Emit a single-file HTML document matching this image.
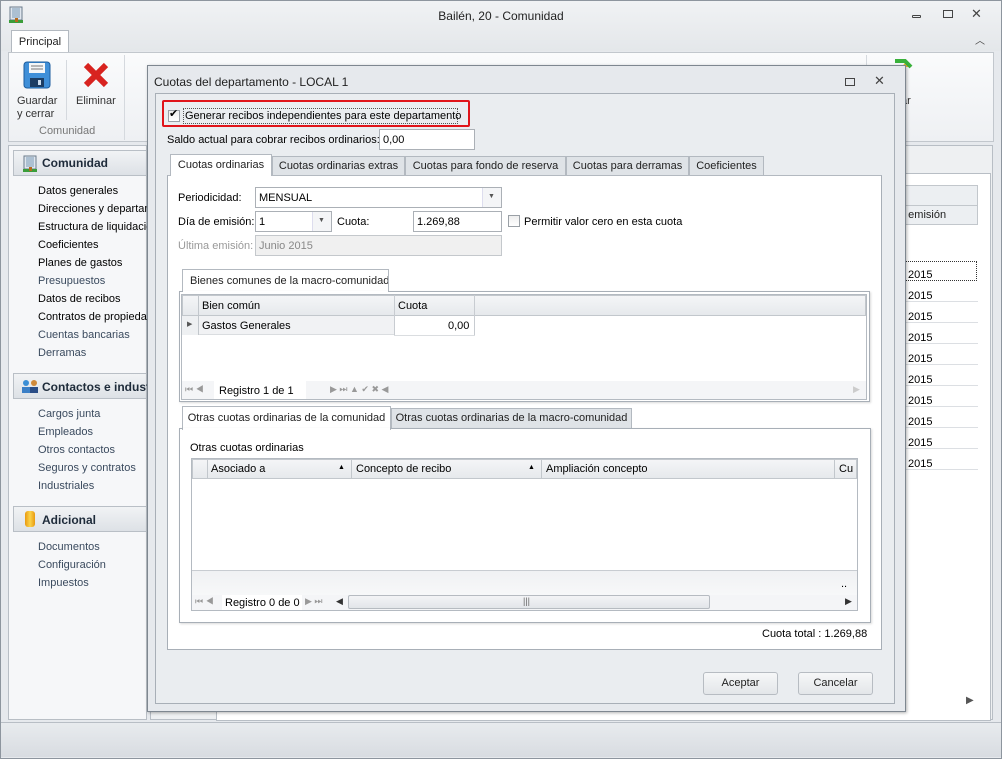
<!DOCTYPE html>
<html><head><meta charset="utf-8"><style>
*{box-sizing:border-box;margin:0;padding:0}
body{width:1002px;height:759px;overflow:hidden;background:#fff;font-family:"Liberation Sans",sans-serif;font-size:11px;color:#000;position:relative}
.a{position:absolute}
.t{position:absolute;white-space:nowrap}
.inp{position:absolute;background:#fff;border:1px solid #abb0b6}
.tab{position:absolute;background:#dfe3e7;border:1px solid #b3b9c0;border-bottom:none;text-align:center;line-height:19px;color:#222;white-space:nowrap;overflow:hidden}
.tab.on{background:#fff}
.cb{position:absolute;width:12px;height:12px;border:1px solid #9aa0a6;background:linear-gradient(#eee,#fff)}
.btn{position:absolute;border:1px solid #b7bcc2;border-radius:3px;background:linear-gradient(#f6f7f8,#e3e6e9);text-align:center;line-height:21px;color:#222}
.hd{position:absolute;background:linear-gradient(#f4f5f7,#e6e9ec);border:1px solid #c2c7cc}
.side{position:absolute;left:38px}
</style></head><body>
<div class="a" style="left:0;top:0;width:1002px;height:759px;background:#e6e9ed;border:1px solid #8d959e"></div>
<div class="a" style="left:1px;top:1px;width:1000px;height:50px;background:linear-gradient(#f0f2f4,#e4e7ea)"></div>
<svg class="a" style="left:8px;top:6px" width="16" height="18"><rect x="2" y="1" width="12" height="13" fill="#dfe6ee" stroke="#6b7c8c"/><path d="M4 3h8M4 5h8M4 7h8M4 9h8M4 11h8" stroke="#7a99b5"/><rect x="1" y="14" width="14" height="3" fill="#3a9d3a"/><rect x="7" y="12" width="3" height="4" fill="#b46a1e"/></svg>
<div class="t" style="left:0;width:1002px;text-align:center;top:9px;font-size:12px;color:#222">Bailén, 20 - Comunidad</div>
<div class="a" style="left:912px;top:15px;width:9px;height:3px;border:1px solid #444;border-radius:1px"></div>
<div class="a" style="left:943px;top:10px;width:10px;height:8px;border:1px solid #444"></div>
<div class="t" style="left:971px;top:6px;font-size:13px;color:#444">✕</div>
<div class="t" style="left:975px;top:32px;font-size:10px;color:#444">︿</div>
<div class="tab on" style="left:11px;top:30px;width:58px;height:23px;line-height:22px">Principal</div>
<div class="a" style="left:8px;top:52px;width:986px;height:90px;background:linear-gradient(#fafbfc,#eef0f3);border:1px solid #c2c7cd"></div>
<svg class="a" style="left:23px;top:61px" width="28" height="28"><rect x="1" y="1" width="26" height="26" rx="3" fill="#3f8fd8" stroke="#1d5d9e"/><rect x="6" y="2" width="16" height="10" fill="#f4f6f8"/><path d="M8 5h12M8 8h12" stroke="#777"/><rect x="7" y="17" width="14" height="9" fill="#1c3d63"/><rect x="15" y="19" width="3" height="5" fill="#cde"/></svg>
<div class="t" style="left:17px;top:95px;line-height:13px;color:#333">Guardar<br>y cerrar</div>
<div class="a" style="left:66px;top:60px;width:1px;height:60px;background:#d5d9de"></div>
<svg class="a" style="left:83px;top:62px" width="26" height="26"><path d="M3 3L23 23M23 3L3 23" stroke="#d8231f" stroke-width="6"/></svg>
<div class="t" style="left:76px;top:95px;color:#333">Eliminar</div>
<div class="t" style="left:39px;top:125px;color:#777">Comunidad</div>
<div class="a" style="left:124px;top:55px;width:1px;height:85px;background:#d5d9de"></div>
<div class="a" style="left:866px;top:55px;width:1px;height:85px;background:#d5d9de"></div>
<svg class="a" style="left:893px;top:59px" width="22" height="30"><path d="M3 8h6l4 -6 4 6h-4v20h-8z" fill="#f6c02b"/><path d="M2 2h10l6 6" fill="none" stroke="#39b13a" stroke-width="4"/></svg>
<div class="t" style="left:901px;top:95px;color:#333">ar</div>
<div class="a" style="left:8px;top:145px;width:139px;height:575px;background:#f6f7f9;border:1px solid #b8bec5"></div>
<div class="a" style="left:13px;top:150px;width:134px;height:26px;background:linear-gradient(#f1f3f5,#dde1e6);border:1px solid #b9bfc6"></div>
<svg class="a" style="left:22px;top:155px" width="16" height="18"><rect x="2" y="1" width="12" height="13" fill="#dfe6ee" stroke="#6b7c8c"/><path d="M4 3h8M4 5h8M4 7h8M4 9h8M4 11h8" stroke="#7a99b5"/><rect x="1" y="14" width="14" height="3" fill="#3a9d3a"/><rect x="7" y="12" width="3" height="4" fill="#b46a1e"/></svg>
<div class="t" style="left:42px;top:156px;font-weight:bold;font-size:12px;color:#1e2b3a">Comunidad</div>
<div class="side t" style="top:185px">Datos generales</div>
<div class="side t" style="top:203px">Direcciones y departam</div>
<div class="side t" style="top:221px">Estructura de liquidació</div>
<div class="side t" style="top:239px">Coeficientes</div>
<div class="side t" style="top:257px">Planes de gastos</div>
<div class="side t" style="top:275px;color:#3a4a5e">Presupuestos</div>
<div class="side t" style="top:293px">Datos de recibos</div>
<div class="side t" style="top:311px">Contratos de propieda</div>
<div class="side t" style="top:329px;color:#3a4a5e">Cuentas bancarias</div>
<div class="side t" style="top:347px;color:#3a4a5e">Derramas</div>
<div class="a" style="left:13px;top:373px;width:134px;height:26px;background:linear-gradient(#f1f3f5,#dde1e6);border:1px solid #b9bfc6"></div>
<svg class="a" style="left:21px;top:378px" width="18" height="16"><circle cx="5" cy="5" r="3" fill="#3b8fd6"/><circle cx="13" cy="5" r="3" fill="#d08a3a"/><rect x="1" y="9" width="8" height="6" fill="#3b7fc6"/><rect x="9" y="9" width="8" height="6" fill="#2a4d86"/></svg>
<div class="t" style="left:42px;top:380px;font-weight:bold;font-size:12px;color:#1e2b3a">Contactos e indust</div>
<div class="side t" style="top:408px;color:#3a4a5e">Cargos junta</div>
<div class="side t" style="top:426px;color:#3a4a5e">Empleados</div>
<div class="side t" style="top:444px;color:#3a4a5e">Otros contactos</div>
<div class="side t" style="top:462px;color:#3a4a5e">Seguros y contratos</div>
<div class="side t" style="top:480px;color:#3a4a5e">Industriales</div>
<div class="a" style="left:13px;top:506px;width:134px;height:26px;background:linear-gradient(#f1f3f5,#dde1e6);border:1px solid #b9bfc6"></div>
<div class="a" style="left:25px;top:511px;width:10px;height:16px;border-radius:3px;background:linear-gradient(90deg,#e89a10,#fbd34a,#e89a10)"></div>
<div class="t" style="left:42px;top:513px;font-weight:bold;font-size:12px;color:#1e2b3a">Adicional</div>
<div class="side t" style="top:541px;color:#3a4a5e">Documentos</div>
<div class="side t" style="top:559px;color:#3a4a5e">Configuración</div>
<div class="side t" style="top:577px;color:#3a4a5e">Impuestos</div>
<div class="a" style="left:150px;top:145px;width:843px;height:575px;background:#eef0f2;border:1px solid #b8bec5"></div>
<div class="a" style="left:216px;top:173px;width:775px;height:548px;background:#fff;border:1px solid #b8bec5"></div>
<div class="a" style="left:880px;top:185px;width:98px;height:40px;background:#eceff2;border:1px solid #c2c7cc"></div>
<div class="a" style="left:880px;top:205px;width:98px;height:1px;background:#c2c7cc"></div>
<div class="t" style="left:899px;top:209px;color:#222">a emisión</div>
<div class="a" style="left:880px;top:261px;width:97px;height:20px;border:1px dotted #333"></div>
<div class="t" style="left:908px;top:265px;line-height:21px">2015<br>2015<br>2015<br>2015<br>2015<br>2015<br>2015<br>2015<br>2015<br>2015</div>
<div class="a" style="left:880px;top:281px;width:98px;height:190px;background:repeating-linear-gradient(transparent 0 20px,#dcdfe3 20px 21px)"></div>
<div class="t" style="left:966px;top:695px;font-size:10px;color:#555">▶</div>
<div class="a" style="left:1px;top:722px;width:1000px;height:35px;background:linear-gradient(#e8ebee,#d8dce1);border-top:1px solid #b8bec5"></div>
<div class="a" style="left:147px;top:65px;width:759px;height:647px;background:#e6e9ed;border:1px solid #7e8790;box-shadow:1px 1px 3px rgba(0,0,0,.3)"></div>
<div class="t" style="left:154px;top:75px;font-size:12px;color:#222">Cuotas del departamento - LOCAL 1</div>
<div class="a" style="left:845px;top:78px;width:10px;height:8px;border:1px solid #444"></div>
<div class="t" style="left:874px;top:73px;font-size:13px;color:#444">✕</div>
<div class="a" style="left:155px;top:93px;width:740px;height:611px;background:#eaedf0;border:1px solid #a8afb7"></div>
<div class="a" style="left:162px;top:100px;width:308px;height:27px;border:2px solid #e0141a;border-radius:2px"></div>
<div class="cb" style="left:168px;top:110px"></div>
<div class="t" style="left:169px;top:107px;font-size:11px">✔</div>
<div class="a" style="left:183px;top:108px;width:275px;height:16px;border:1px dotted #555"></div>
<div class="t" style="left:185px;top:110px">Generar recibos independientes para este departamento</div>
<div class="t" style="left:167px;top:134px">Saldo actual para cobrar recibos ordinarios:</div>
<div class="inp" style="left:379px;top:129px;width:96px;height:21px"></div>
<div class="t" style="left:383px;top:134px">0,00</div>
<div class="tab on" style="left:170px;top:154px;width:102px;height:22px;line-height:20px">Cuotas ordinarias</div>
<div class="tab" style="left:272px;top:156px;width:133px;height:20px">Cuotas ordinarias extras</div>
<div class="tab" style="left:405px;top:156px;width:161px;height:20px">Cuotas para fondo de reserva</div>
<div class="tab" style="left:566px;top:156px;width:123px;height:20px">Cuotas para derramas</div>
<div class="tab" style="left:689px;top:156px;width:75px;height:20px">Coeficientes</div>
<div class="a" style="left:167px;top:175px;width:715px;height:475px;background:#fff;border:1px solid #a8afb7;border-top-color:#b3b9c0"></div>
<div class="a" style="left:171px;top:175px;width:100px;height:1px;background:#fff"></div>
<div class="t" style="left:178px;top:192px">Periodicidad:</div>
<div class="inp" style="left:255px;top:187px;width:247px;height:21px"></div>
<div class="t" style="left:259px;top:192px">MENSUAL</div>
<div class="a" style="left:482px;top:188px;width:19px;height:19px;border-left:1px solid #dde;background:#f4f5f7"></div>
<div class="t" style="left:488px;top:193px;font-size:7px;color:#555">▼</div>
<div class="t" style="left:178px;top:216px">Día de emisión:</div>
<div class="inp" style="left:255px;top:211px;width:77px;height:21px"></div>
<div class="t" style="left:259px;top:216px">1</div>
<div class="a" style="left:312px;top:212px;width:19px;height:19px;border-left:1px solid #dde;background:#f4f5f7"></div>
<div class="t" style="left:318px;top:217px;font-size:7px;color:#555">▼</div>
<div class="t" style="left:337px;top:216px">Cuota:</div>
<div class="inp" style="left:413px;top:211px;width:89px;height:21px"></div>
<div class="t" style="left:417px;top:216px">1.269,88</div>
<div class="cb" style="left:508px;top:215px"></div>
<div class="t" style="left:524px;top:216px">Permitir valor cero en esta cuota</div>
<div class="t" style="left:178px;top:240px;color:#999">Última emisión:</div>
<div class="inp" style="left:255px;top:235px;width:247px;height:21px;background:#f0f0f0;border-color:#c4c8cc"></div>
<div class="t" style="left:259px;top:240px;color:#888">Junio 2015</div>
<div class="tab on" style="left:182px;top:269px;width:207px;height:23px;line-height:22px;text-align:left;padding-left:7px">Bienes comunes de la macro-comunidad</div>
<div class="a" style="left:179px;top:291px;width:691px;height:111px;border:1px solid #a8afb7;box-shadow:1px 1px 2px rgba(0,0,0,.15)"></div>
<div class="a" style="left:183px;top:291px;width:205px;height:1px;background:#fff"></div>
<div class="a" style="left:181px;top:294px;width:686px;height:106px;border:1px solid #b4bac1"></div>
<div class="hd" style="left:182px;top:295px;width:684px;height:21px"></div>
<div class="a" style="left:198px;top:295px;width:1px;height:40px;background:#c2c7cc"></div>
<div class="a" style="left:394px;top:295px;width:1px;height:40px;background:#c8ccd1"></div>
<div class="a" style="left:474px;top:295px;width:1px;height:40px;background:#c8ccd1"></div>
<div class="t" style="left:202px;top:300px">Bien común</div>
<div class="t" style="left:398px;top:300px">Cuota</div>
<div class="a" style="left:182px;top:316px;width:17px;height:19px;background:#eef0f2;border-right:1px solid #c2c7cc"></div>
<div class="t" style="left:187px;top:320px;font-size:7px;color:#555">▶</div>
<div class="a" style="left:199px;top:316px;width:195px;height:19px;background:#f1f2f4;border-bottom:1px solid #dadde0"></div>
<div class="a" style="left:394px;top:335px;width:81px;height:1px;background:#dadde0"></div>
<div class="t" style="left:202px;top:320px">Gastos Generales</div>
<div class="t" style="left:448px;top:320px">0,00</div>
<div class="a" style="left:182px;top:381px;width:684px;height:18px;background:#f4f5f7"></div>
<div class="t" style="left:185px;top:384px;font-size:9px;color:#999">⏮ ◀</div>
<div class="a" style="left:214px;top:381px;width:92px;height:18px;background:#fff"></div>
<div class="t" style="left:219px;top:385px">Registro 1 de 1</div>
<div class="t" style="left:330px;top:384px;font-size:9px;color:#999">▶ ⏭ ▲ ✔ ✖ ◀</div>
<div class="t" style="left:853px;top:384px;font-size:9px;color:#ccc">▶</div>
<div class="tab on" style="left:182px;top:406px;width:209px;height:24px;line-height:22px">Otras cuotas ordinarias de la comunidad</div>
<div class="tab" style="left:391px;top:408px;width:241px;height:21px">Otras cuotas ordinarias de la macro-comunidad</div>
<div class="a" style="left:179px;top:428px;width:692px;height:195px;border:1px solid #a8afb7;box-shadow:1px 1px 2px rgba(0,0,0,.15)"></div>
<div class="a" style="left:183px;top:428px;width:207px;height:1px;background:#fff"></div>
<div class="t" style="left:190px;top:442px">Otras cuotas ordinarias</div>
<div class="a" style="left:191px;top:458px;width:667px;height:153px;border:1px solid #b4bac1"></div>
<div class="hd" style="left:192px;top:459px;width:665px;height:20px"></div>
<div class="a" style="left:207px;top:459px;width:1px;height:20px;background:#c2c7cc"></div>
<div class="a" style="left:351px;top:459px;width:1px;height:20px;background:#c2c7cc"></div>
<div class="a" style="left:541px;top:459px;width:1px;height:20px;background:#c2c7cc"></div>
<div class="a" style="left:834px;top:459px;width:1px;height:20px;background:#c2c7cc"></div>
<div class="t" style="left:211px;top:463px">Asociado a</div>
<div class="t" style="left:338px;top:464px;font-size:7px">▲</div>
<div class="t" style="left:356px;top:463px">Concepto de recibo</div>
<div class="t" style="left:528px;top:464px;font-size:7px">▲</div>
<div class="t" style="left:546px;top:463px">Ampliación concepto</div>
<div class="t" style="left:839px;top:463px">Cu</div>
<div class="a" style="left:192px;top:570px;width:665px;height:25px;background:linear-gradient(#f0f1f3,#f7f8f9);border-top:1px solid #c8ccd1"></div>
<div class="t" style="left:841px;top:578px">..</div>
<div class="a" style="left:192px;top:595px;width:665px;height:15px;background:#f4f5f7"></div>
<div class="t" style="left:195px;top:596px;font-size:9px;color:#999">⏮ ◀</div>
<div class="a" style="left:222px;top:595px;width:80px;height:15px;background:#fff"></div>
<div class="t" style="left:225px;top:597px">Registro 0 de 0</div>
<div class="t" style="left:305px;top:596px;font-size:9px;color:#999">▶ ⏭</div>
<div class="t" style="left:336px;top:596px;font-size:9px;color:#333">◀</div>
<div class="a" style="left:348px;top:595px;width:362px;height:14px;border:1px solid #b6bbc1;border-radius:2px;background:linear-gradient(#f3f4f6,#e2e5e9)"></div>
<div class="t" style="left:523px;top:596px;font-size:9px;color:#666">|||</div>
<div class="t" style="left:845px;top:596px;font-size:9px;color:#333">▶</div>
<div class="t" style="left:762px;top:628px">Cuota total : 1.269,88</div>
<div class="btn" style="left:703px;top:672px;width:75px;height:23px">Aceptar</div>
<div class="btn" style="left:798px;top:672px;width:75px;height:23px">Cancelar</div>
</body></html>
